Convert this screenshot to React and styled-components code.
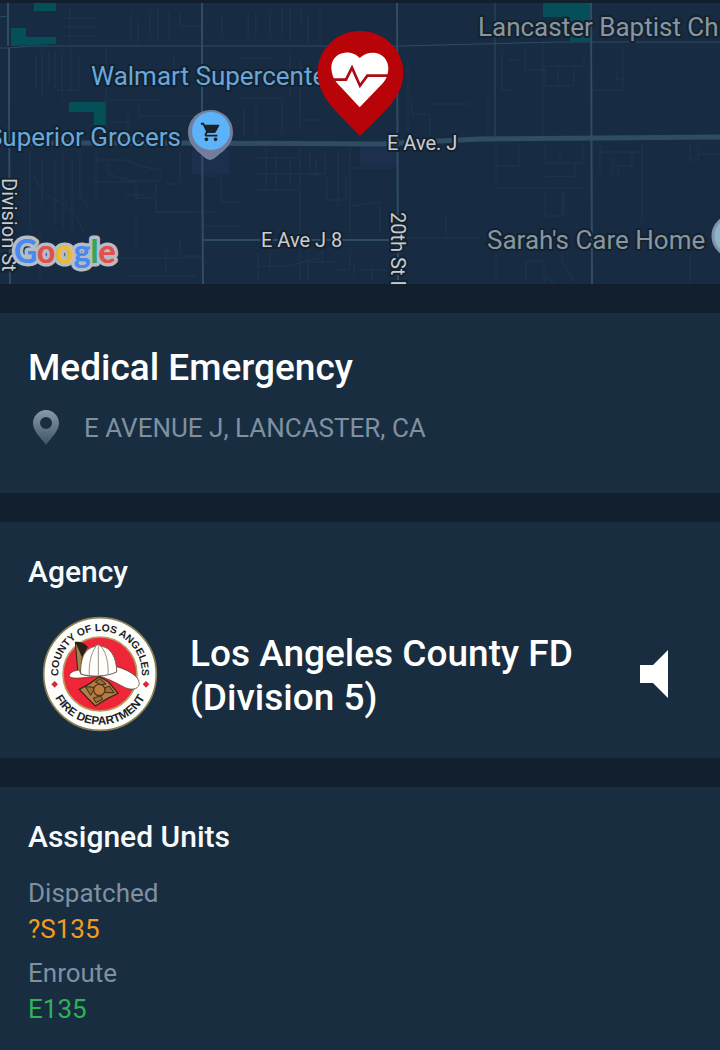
import styled, { createGlobalStyle } from 'styled-components';
import { MdShoppingCart } from 'react-icons/md';

const GlobalStyle = createGlobalStyle`
    * {
        box-sizing: border-box;
    }

    body {
        margin: 0;
        background: #182d40;
        font-family: Roboto, 'Liberation Sans', sans-serif;
    }
`;

const PageStyled = styled.main`
    display: flex;
    flex-direction: column;
    gap: 29px;
    min-height: 100vh;
    background: #12202d;
`;

const MapStyled = styled.svg`
    display: block;
    width: 100%;
    height: 284px;
    background: #172b42;
`;

const MapLabelStyled = styled.text`
    fill: ${({ $color }) => $color || '#c9cdd2'};
    font-size: ${({ $size }) => $size || 20}px;
    paint-order: stroke;
    stroke: #14212f;
    stroke-width: 4px;
    stroke-linejoin: round;
`;

const GoogleStyled = styled.text`
    font-family: Lato, sans-serif;
    font-size: 32px;
    font-weight: 700;
    paint-order: stroke;
    stroke: ${({ $outline }) => ($outline ? '#b4bcc6' : 'none')};
    stroke-width: 7px;
    stroke-linejoin: round;
`;

const CardStyled = styled.section`
    padding: 32px 28px ${({ $bottom }) => $bottom || 26}px;
    background: #182d40;

    &:last-child {
        flex: 1;
    }
`;

const TitleStyled = styled.h1`
    margin: 0;
    color: #fff;
    font-size: 37px;
    font-weight: 500;
    line-height: 46px;
`;

const HeadingStyled = styled.h2`
    margin: 0;
    color: #f7fafc;
    font-size: 30px;
    font-weight: 500;
    line-height: 36px;
`;

const AddressStyled = styled.address`
    display: flex;
    align-items: center;
    gap: 24px;
    margin-top: 19px;
    padding-left: 5px;
    color: #7f90a1;
    font-size: 26px;
    font-style: normal;
    line-height: 36px;
`;

const AgencyStyled = styled.div`
    display: flex;
    align-items: center;
    gap: 32px;
    margin-top: 26px;
    padding: 0 14px;
`;

const AgencyNameStyled = styled.p`
    flex: 1;
    margin: 4px 0 0;
    color: #fff;
    font-size: 37px;
    font-weight: 500;
    line-height: 44px;
`;

const SpeakerStyled = styled.button`
    display: flex;
    padding: 10px;
    border: 0;
    background: none;
    cursor: pointer;
`;

const SealTextStyled = styled.text`
    fill: #1d1d1f;
    font-family: 'Liberation Sans', Arial, sans-serif;
    font-size: ${({ $size }) => $size}px;
    font-weight: 700;
`;

const UnitsStyled = styled.dl`
    display: flex;
    flex-direction: column;
    gap: 8px;
    margin: 20px 0 0;
    font-size: 26px;
    line-height: 36px;
`;

const StatusStyled = styled.dt`
    color: #7f90a1;
`;

const UnitStyled = styled.dd`
    margin: 0;
    color: ${({ $color }) => $color};
`;

const units = [
    { status: 'Dispatched', name: '?S135', color: '#f39c1f' },
    { status: 'Enroute', name: 'E135', color: '#2fb257' },
];

const googleLetters = [
    ['G', '#4a8af0'],
    ['o', '#e2504a'],
    ['o', '#eebb2b'],
    ['g', '#4a8af0'],
    ['l', '#37a556'],
    ['e', '#e2504a'],
];

function EmergencyPin() {
    return (
        <svg x="317" y="30" width="87" height="107" viewBox="231 90 261 321">
            <path
                d="M360 93C289 93 233 149 233 218C233 278 275 320 305 352C325 374 344 392 360 408C376 392 396 374 416 352C448 320 490 278 490 218C490 149 432 93 360 93Z"
                fill="#b80309"
            />
            <path
                d="M359 174C345 160 329 157 315 158C290 160 273 180 274 205C275 222 280 237 291 249L359 322L429 249C440 237 445 222 445 205C445 180 427 159 402 158C387 157 371 162 359 174Z"
                fill="#fff"
            />
            <path
                d="M270 239H318L336 203L360 257L382 227H450"
                fill="none"
                stroke="#a80d14"
                strokeWidth="8"
            />
        </svg>
    );
}

function IncidentMap() {
    return (
        <MapStyled viewBox="0 0 720 284" preserveAspectRatio="xMidYMid slice" role="img" aria-label="Map">
            {/* parks and building lots */}
            <g fill="#055058">
                <path d="M34 3H56V11H34Z" />
                <path d="M11 28H26V37H56V44L11 46Z" />
                <path d="M69 102H106V125H94V112H69Z" />
                <path d="M543 3H590V41H570V17H543Z" />
            </g>
            <path d="M192 150H229V174H192ZM360 145H397V166H360Z" fill="#1c2f4c" />

            {/* side streets */}
            <g fill="none" stroke="#1e374b" strokeWidth="1">
                <path d="M62 18H96M62 27H96M62 36H96M70 8V44M131 12V42M138 20V46M150 10V38M158 8V40M169 12V40M180 12V26H202M222 14V38" />
                <path d="M36 54V88M42 50V96M49 50V84M55 50V90M62 50V100M71 50V92M79 54V88M106 48V130M57 90H83M110 100H158M128 108V138M139 104V116H198M174 55V84M110 122H130" />
                <path d="M248 12V44M256 12V36M270 10V38M282 8V36M290 8V40M301 10V26M308 16V44M320 4V44M240 58H272M240 98H282V134M244 108V136M256 106V138M300 60V128M290 52V98M303 120H320M408 60V136M412 102V114H430V136M430 104H470" />
                <path d="M502 50V90H513M508 60H520M525 48V70H545M543 44V136M543 66H584V54M545 67V86H574V68M558 67V86M592 90H623V48M617 70V79H624M488 92V134" />
                <path d="M30 152V230M42 158V204M55 160V222M63 152V228M72 160V236M80 150V196L88 206M96 146V198M97 160H126L140 166L158 170M92 182H136V198H156M124 195H146M108 163V174L130 181H160V168M180 152V184H166M34 176C44 200 58 198 72 212C80 220 82 226 83 236M156 184V212H190M136 212V246M154 212H202M118 258H202M166 250V274M180 240V256H202M40 230V278M130 276H196" />
                <path d="M222 176H204M221 178V202H238M219 212H204M204 226H240M266 146V190M254 158H300M254 174H320M254 190H300M276 152V190M290 160V184M300 148V280M310 152V174H325V154M338 152V206M316 158V176M327 176V200H346V176M350 146V236M350 168H394M352 206L380 202M380 202V232M258 252V280M270 252V272M258 266H288L320 258M302 262H334M308 240V280M322 240V264M334 270H350V250M354 264V276M360 270H386M372 264V280M446 214V238M398 238H480" />
                <path d="M496 146V188H583M496 166H519V144M545 146V163H583V146M545 177L575 176V164M560 150V162M545 190V216H562V190M564 192V216M600 146V174M600 152H640M612 166H632V152M612 158V174M618 166V175M642 144V222M690 144V160H698V146M698 154H720M496 254V284M526 280V261H544V284M562 254V262L575 282M544 276L556 284M690 254V284" />
            </g>

            {/* main roads */}
            <g fill="none" stroke="#2f4c65" strokeWidth="2">
                <path d="M0 17L8 16M0 48H9L30 46L400 46L560 42H720" strokeWidth="1" />
                <path d="M8 0V46M9 48V110L10 284" />
                <path d="M202 2V110L203 284" />
                <path d="M397 2L398 284" />
                <path d="M495 2V137" strokeWidth="1" />
                <path d="M591 2L592 284" />
                <path d="M203 240H397" />
                <path d="M0 143H180L380 144L480 139L720 137" strokeWidth="5" />
            </g>
            <rect width="720" height="3" fill="#12202d" />

            <MapLabelStyled x="478" y="36" $size={26} $color="#87979f">
                Lancaster Baptist Church
            </MapLabelStyled>
            <MapLabelStyled x="91" y="85" $size={26} $color="#67a8dc">
                Walmart Supercenter
            </MapLabelStyled>
            <MapLabelStyled x="181" y="146" $size={26} $color="#67a8dc" textAnchor="end">
                Superior Grocers
            </MapLabelStyled>
            <MapLabelStyled x="487" y="249" $size={26} $color="#87979f">
                Sarah&apos;s Care Home
            </MapLabelStyled>
            <MapLabelStyled x="387" y="150">E Ave. J</MapLabelStyled>
            <MapLabelStyled x="261" y="247">E Ave J 8</MapLabelStyled>
            <MapLabelStyled transform="translate(2 178) rotate(90)">Division St</MapLabelStyled>
            <MapLabelStyled transform="translate(391 212) rotate(90)">20th St I</MapLabelStyled>

            {[true, false].map((outline) => (
                <GoogleStyled key={String(outline)} x="14" y="263" $outline={outline} aria-hidden={outline}>
                    {googleLetters.map(([letter, color], index) => (
                        <tspan key={index} fill={color}>
                            {letter}
                        </tspan>
                    ))}
                </GoogleStyled>
            ))}

            <path d="M210 110A22 22 0 0 0 188 132C188 144 195 149 204 157Q210 163 216 157C226 149 233 144 233 132A22 22 0 0 0 210 110Z" fill="#717f9c" />
            <circle cx="211" cy="131" r="19" fill="#5cb3fa" />
            <MdShoppingCart x="200" y="121" size="22" color="#18212c" />
            <circle cx="733" cy="236" r="20" fill="#8fb4c8" stroke="#8291ad" strokeWidth="3" />
            <EmergencyPin />
        </MapStyled>
    );
}

function FireSeal() {
    return (
        <svg width="116" height="116" viewBox="34 34 348 348" role="img" aria-label="County of Los Angeles Fire Department">
            <defs>
                <path id="sealTop" d="M84 220A125 125 0 1 1 332 220" />
                <path id="sealBottom" d="M56 208A152 152 0 0 0 360 208" />
            </defs>
            <circle cx="208" cy="208" r="169" fill="#fdfdfa" stroke="#8b7f55" strokeWidth="5" />
            <circle cx="208" cy="208" r="111" fill="#ee2638" stroke="#b99a63" strokeWidth="5" />
            <SealTextStyled $size={31} textAnchor="middle">
                <textPath href="#sealTop" startOffset="50%">
                    COUNTY OF LOS ANGELES
                </textPath>
            </SealTextStyled>
            <SealTextStyled $size={35} textAnchor="middle">
                <textPath href="#sealBottom" startOffset="50%">
                    FIRE DEPARTMENT
                </textPath>
            </SealTextStyled>
            <path d="M72 229L82 239L72 249L62 239ZM346 229L356 239L346 249L336 239Z" fill="#d8283c" />

            {/* helmet */}
            <path d="M134 112L170 126L154 160L150 212L142 210Z" fill="#a6824b" stroke="#2b2118" strokeWidth="3" />
            <path d="M134 112C150 108 162 116 170 126L154 158Z" fill="#2b2118" />
            <path
                d="M116 216C114 204 130 198 146 196L150 208C190 220 230 216 258 186C290 196 326 212 326 238C322 258 296 256 278 246C252 232 222 218 206 214C170 216 136 226 116 216Z"
                fill="#fffefa"
                stroke="#4c3425"
                strokeWidth="2"
            />
            <path
                d="M150 208C148 166 160 130 194 125C198 119 206 119 210 125C238 126 258 156 258 202C230 216 180 218 150 208Z"
                fill="#fffefa"
                stroke="#6b5c52"
                strokeWidth="3"
            />
            <path d="M196 126C180 146 174 180 176 212M203 124V213M212 126C228 146 234 180 232 210" fill="none" stroke="#9a938c" strokeWidth="3" />

            {/* shield */}
            <path
                d="M146 254L178 236L206 216L234 232L262 266L230 282L194 304L174 284Z"
                fill="#b08045"
                stroke="#3d2917"
                strokeWidth="4"
            />
            <path d="M164 246L194 248L180 272ZM194 232L208 222L226 238L210 240ZM222 250L236 244L250 264L222 264ZM188 280L210 274L216 284L196 294Z" fill="#99703b" stroke="#3d2917" strokeWidth="3" />
            <circle cx="206" cy="256" r="17" fill="#b9803f" stroke="#6b2a1c" strokeWidth="4" />
        </svg>
    );
}

function App() {
    return (
        <>
            <GlobalStyle />
            <PageStyled>
                <IncidentMap />

                <CardStyled $bottom={47}>
                    <TitleStyled>Medical Emergency</TitleStyled>
                    <AddressStyled>
                        <svg width="27" height="36" viewBox="0 0 27 36" aria-hidden="true">
                            <defs>
                                <linearGradient id="pinShade" x1="0" y1="0" x2="0" y2="1">
                                    <stop offset="0" stopColor="#8a98a6" />
                                    <stop offset="1" stopColor="#3f5467" />
                                </linearGradient>
                            </defs>
                            <path
                                d="M13 0C6 0 0 6 0 13C0 21 8 28 13 35C18 28 26 21 26 13C26 6 20 0 13 0ZM13 7A6 6 0 1 1 13 19A6 6 0 1 1 13 7Z"
                                fill="url(#pinShade)"
                                fillRule="evenodd"
                            />
                        </svg>
                        <span>E AVENUE J, LANCASTER, CA</span>
                    </AddressStyled>
                </CardStyled>

                <CardStyled>
                    <HeadingStyled>Agency</HeadingStyled>
                    <AgencyStyled>
                        <FireSeal />
                        <AgencyNameStyled>Los Angeles County FD (Division 5)</AgencyNameStyled>
                        <SpeakerStyled type="button" aria-label="Mute">
                            <svg width="28" height="48" viewBox="0 0 28 48" aria-hidden="true">
                                <path d="M0 15H13L28 0V48L13 33H0Z" fill="#fff" />
                            </svg>
                        </SpeakerStyled>
                    </AgencyStyled>
                </CardStyled>

                <CardStyled>
                    <HeadingStyled>Assigned Units</HeadingStyled>
                    <UnitsStyled>
                        {units.map(({ status, name, color }) => (
                            <div key={name}>
                                <StatusStyled>{status}</StatusStyled>
                                <UnitStyled $color={color}>{name}</UnitStyled>
                            </div>
                        ))}
                    </UnitsStyled>
                </CardStyled>
            </PageStyled>
        </>
    );
}

export default App;
